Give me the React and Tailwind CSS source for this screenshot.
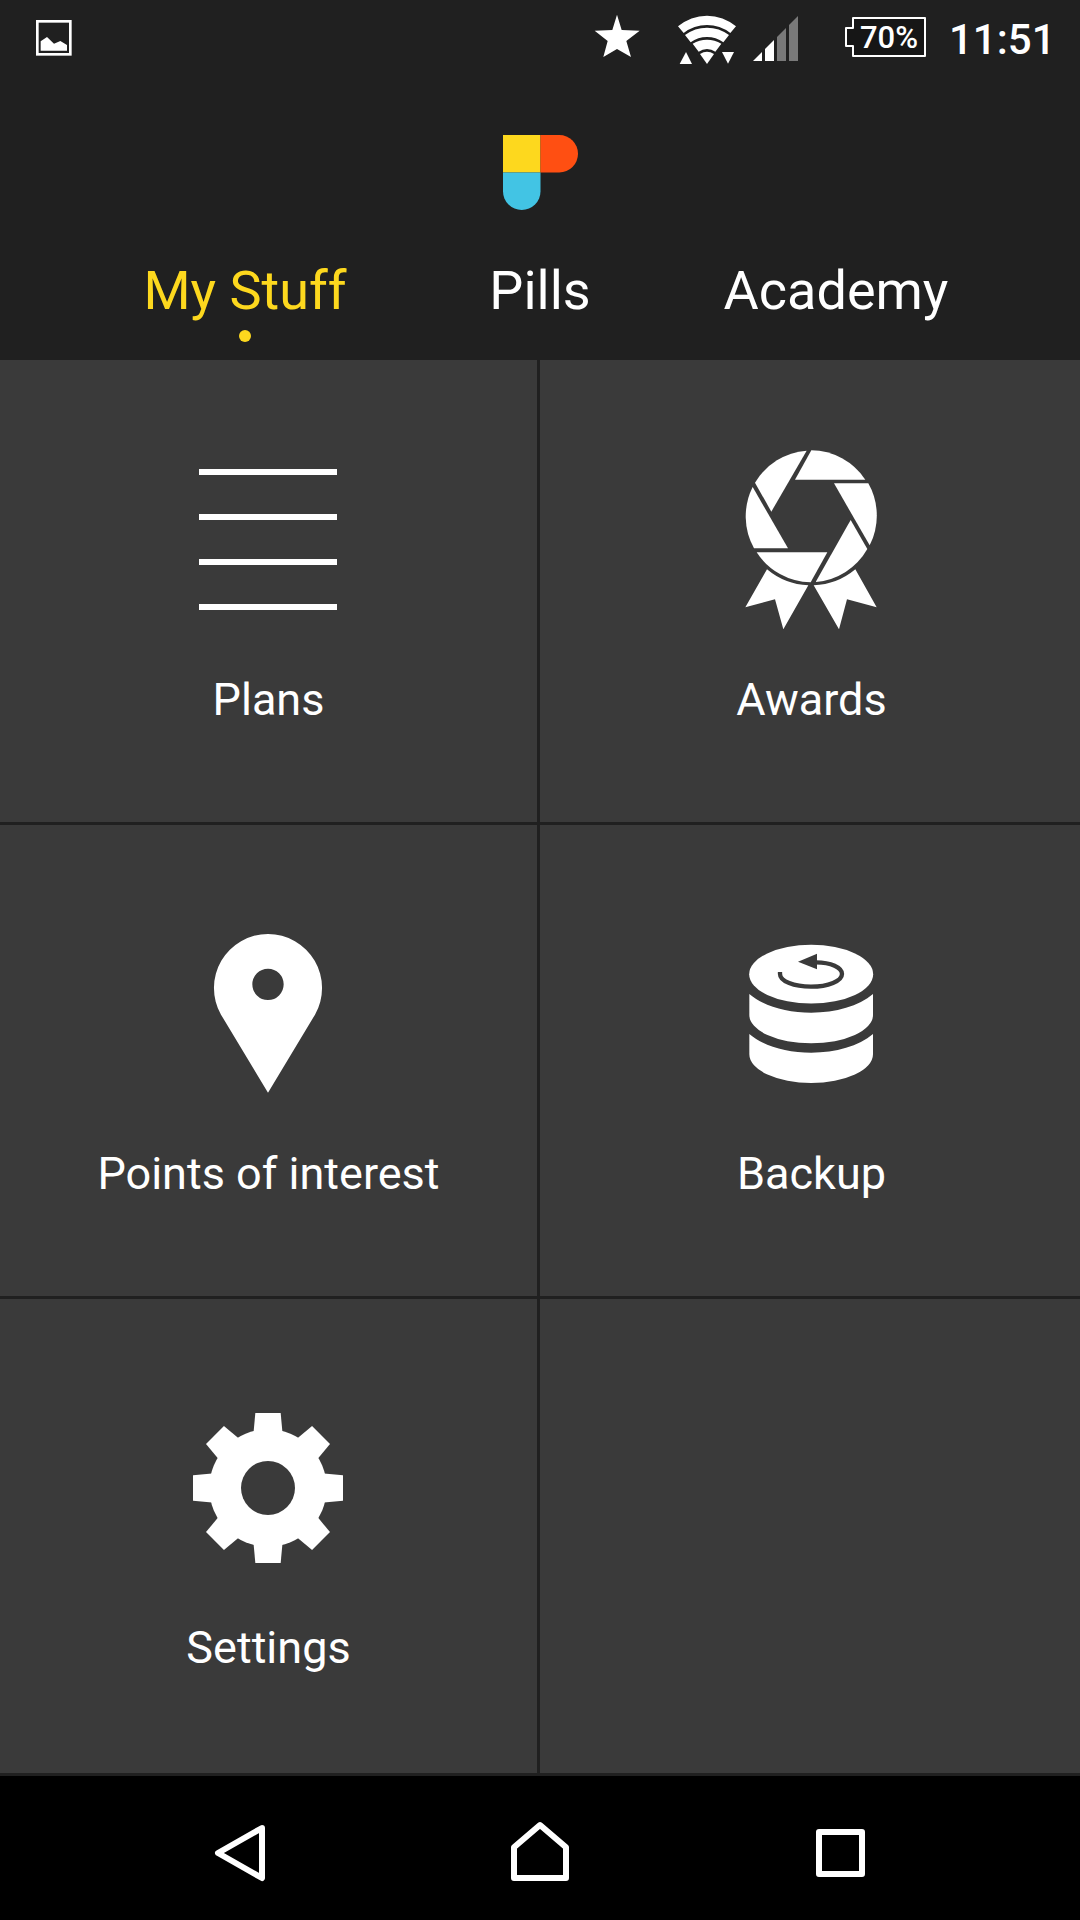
import React from 'react';

const GEAR_TEETH = [0, 45, 90, 135, 180, 225, 270, 315];

const TileIcon = ({ viewBox, children }) => (
    <svg viewBox={viewBox} className="w-[179px] h-[180px] overflow-visible" fill="#ffffff">
        {children}
    </svg>
);

const PlansIcon = () => (
    <TileIcon viewBox="-3 30 537 540">
        <rect x="57" y="87" width="414" height="18" />
        <rect x="57" y="222" width="414" height="18" />
        <rect x="57" y="357" width="414" height="18" />
        <rect x="57" y="492" width="414" height="18" />
    </TileIcon>
);

const AwardsIcon = () => (
    <TileIcon viewBox="6 60 537 540">
        {/* Shutter blades */}
        <path d="M105 158A197 197 0 0 1 260 62L154 245Z" />
        <path d="M274 61A197 197 0 0 1 436 149H225Z" />
        <path d="M342 160H445A197 197 0 0 1 449 346Z" />
        <path d="M392 270L442 357A197 197 0 0 1 287 456Z" />
        <path d="M322 367L272 457A197 197 0 0 1 110 367Z" />
        <path d="M204 355H102A197 197 0 0 1 98 171Z" />
        {/* Ribbons */}
        <path d="M141 418A206 206 0 0 0 265 466L190 598L165 508L76 532Z" />
        <path d="M281 466A206 206 0 0 0 406 418L470 532L381 508L357 598Z" />
    </TileIcon>
);

const PinIcon = () => (
    <TileIcon viewBox="297 12 537 540">
        <path
            fillRule="evenodd"
            d="M564 42A162 162 0 0 1 705 284L564 518L423 284A162 162 0 0 1 564 42ZM564 146A47 47 0 1 0 564 240A47 47 0 1 0 564 146Z"
        />
    </TileIcon>
);

const BackupIcon = () => (
    <TileIcon viewBox="6 12 537 540">
        <ellipse cx="273.5" cy="162.5" rx="186" ry="88" />
        <path d="M88 222C130 258 200 278 273.5 278S417 258 459 222V285A185.5 85 0 0 1 88 285Z" />
        <path d="M88 342C130 378 200 398 273.5 398S417 378 459 342V403A185.5 86 0 0 1 88 403Z" />
        <path
            d="M180 156V162C180 184 222 200 273 200C325 200 366 183 366 162C366 143 333 127 288 127"
            fill="none"
            stroke="#3a3a3a"
            strokeWidth="13"
        />
        <path d="M234 125L291 101V148Z" fill="#3a3a3a" />
    </TileIcon>
);

const SettingsIcon = () => (
    <TileIcon viewBox="27 24 537 540">
        {GEAR_TEETH.map((angle) => (
            <path key={angle} d="M256 69H332L338 134H250Z" transform={`rotate(${angle} 294 294)`} />
        ))}
        <circle cx="294" cy="294" r="176" />
        <circle cx="294" cy="294" r="81" fill="#3a3a3a" />
    </TileIcon>
);

const tabs = [
    { label: 'My Stuff', active: true },
    { label: 'Pills', active: false },
    { label: 'Academy', active: false },
];

const tiles = [
    { label: 'Plans', Icon: PlansIcon },
    { label: 'Awards', Icon: AwardsIcon },
    { label: 'Points of interest', Icon: PinIcon },
    { label: 'Backup', Icon: BackupIcon },
    { label: 'Settings', Icon: SettingsIcon },
];

const StatusBar = () => (
    <div className="flex justify-between h-[72px] pl-9 pr-[27px]">
        <svg viewBox="108 0 108 216" className="w-9 h-[72px]">
            <rect x="112" y="64" width="99" height="99" fill="none" stroke="#ffffff" strokeWidth="8" />
            <path d="M122 124L141 111L162 131L181 123L201 135V152H122Z" fill="#ffffff" />
        </svg>
        <div className="flex">
            <svg viewBox="45 0 132 216" className="w-11 h-[72px] overflow-visible" fill="#ffffff">
                <path d="M111 44L125 90L179 92L139 123L153 171L111 147L70 171L83 123L44 92L97 90Z" />
            </svg>
            <svg viewBox="294 0 174 216" className="w-[58px] h-[72px] ml-[39px]" fill="#ffffff">
                <path d="M294 79A134 134 0 0 1 468 79L451 99A113 113 0 0 0 311 99Z" />
                <path d="M315 105A110 110 0 0 1 447 105L430 127A83 83 0 0 0 332 127Z" />
                <path d="M338 131A83 83 0 0 1 424 131L406 155A43 43 0 0 0 356 155Z" />
                <path d="M360 162A40 40 0 0 1 402 162L381 192Z" />
                <path d="M318 156L336 192H299Z" />
                <path d="M426 156H462L444 191Z" />
            </svg>
            <svg viewBox="519 0 135 216" className="w-[45px] h-[72px] ml-[17px]" fill="#ffffff">
                <path d="M519 183L546 156V183Z" />
                <path d="M555 147L582 120V183H555Z" />
                <path d="M591 111L618 84V183H591Z" fill="#797979" />
                <path d="M627 75L654 48V183H627Z" fill="#797979" />
            </svg>
            <svg viewBox="845 0 81 72" className="w-[81px] h-[72px] ml-[47px]">
                <path
                    d="M853 18H925V56H853V46H846V28H853Z"
                    fill="#161616"
                    stroke="#ffffff"
                    strokeWidth="2"
                    strokeLinejoin="round"
                />
                <text x="860" y="47.5" className="text-[31px] font-medium" fill="#ffffff">70%</text>
            </svg>
            <span className="w-[104px] ml-[23px] pt-[15px] text-[42px] leading-[50px] font-medium whitespace-nowrap">11:51</span>
        </div>
    </div>
);

const Header = () => (
    <header className="h-[360px] bg-[#202020]">
        <StatusBar />
        <svg viewBox="0 0 75 75" className="block w-[75px] h-[75px] mt-[63px] ml-[503px]">
            <rect width="37.5" height="37.5" fill="#fdd81e" />
            <path d="M37.5 0H56.25A18.75 18.75 0 0 1 56.25 37.5H37.5Z" fill="#ff4f12" />
            <path d="M0 37.5H37.5V56.25A18.75 18.75 0 0 1 0 56.25Z" fill="#42c4e4" />
        </svg>
        <nav className="grid grid-cols-3 px-24 mt-[49px]">
            {tabs.map(({ label, active }) => (
                <div key={label} className={`flex flex-col items-center text-[54px] leading-[64px] ${active ? 'pl-[2px] text-[#fdd81e]' : 'text-white'}`}>
                    <span className="whitespace-nowrap">{label}</span>
                    {active && <span className="size-3 mt-[7px] rounded-full bg-[#fdd81e]" />}
                </div>
            ))}
        </nav>
    </header>
);

const NavBar = () => (
    <footer className="grid grid-cols-3 items-center justify-items-center h-36 px-[90px] bg-black">
        <svg viewBox="72 186 216 216" className="size-[72px]" fill="none" stroke="#ffffff" strokeWidth="18" strokeLinejoin="round">
            <path d="M246 234L114 309L246 384Z" />
        </svg>
        <svg viewBox="972 186 216 216" className="size-[72px]" fill="none" stroke="#ffffff" strokeWidth="18" strokeLinejoin="round">
            <path d="M1002 384H1158V292L1080 225L1002 292Z" />
        </svg>
        <svg viewBox="312 186 216 216" className="size-[72px]" fill="none" stroke="#ffffff" strokeWidth="18" strokeLinejoin="round">
            <path d="M357 246H486V372H357Z" />
        </svg>
    </footer>
);

export default function App() {
    return (
        <div className="w-[1080px] h-[1920px] overflow-hidden bg-[#202020] text-white font-[Roboto,sans-serif]">
            <Header />
            <main className="grid grid-cols-[537px_540px] grid-rows-[462px_471px_474px] gap-[3px] pb-[3px]">
                {tiles.map(({ label, Icon }) => (
                    <div key={label} className="flex flex-col items-center justify-end pb-[95px] nth-[5]:pb-[98px] even:pl-[3px] bg-[#3a3a3a]">
                        <Icon />
                        <span className="mt-[43px] text-[45px] leading-[54px] whitespace-nowrap">{label}</span>
                    </div>
                ))}
                <div className="bg-[#3a3a3a]" />
            </main>
            <NavBar />
        </div>
    );
}
